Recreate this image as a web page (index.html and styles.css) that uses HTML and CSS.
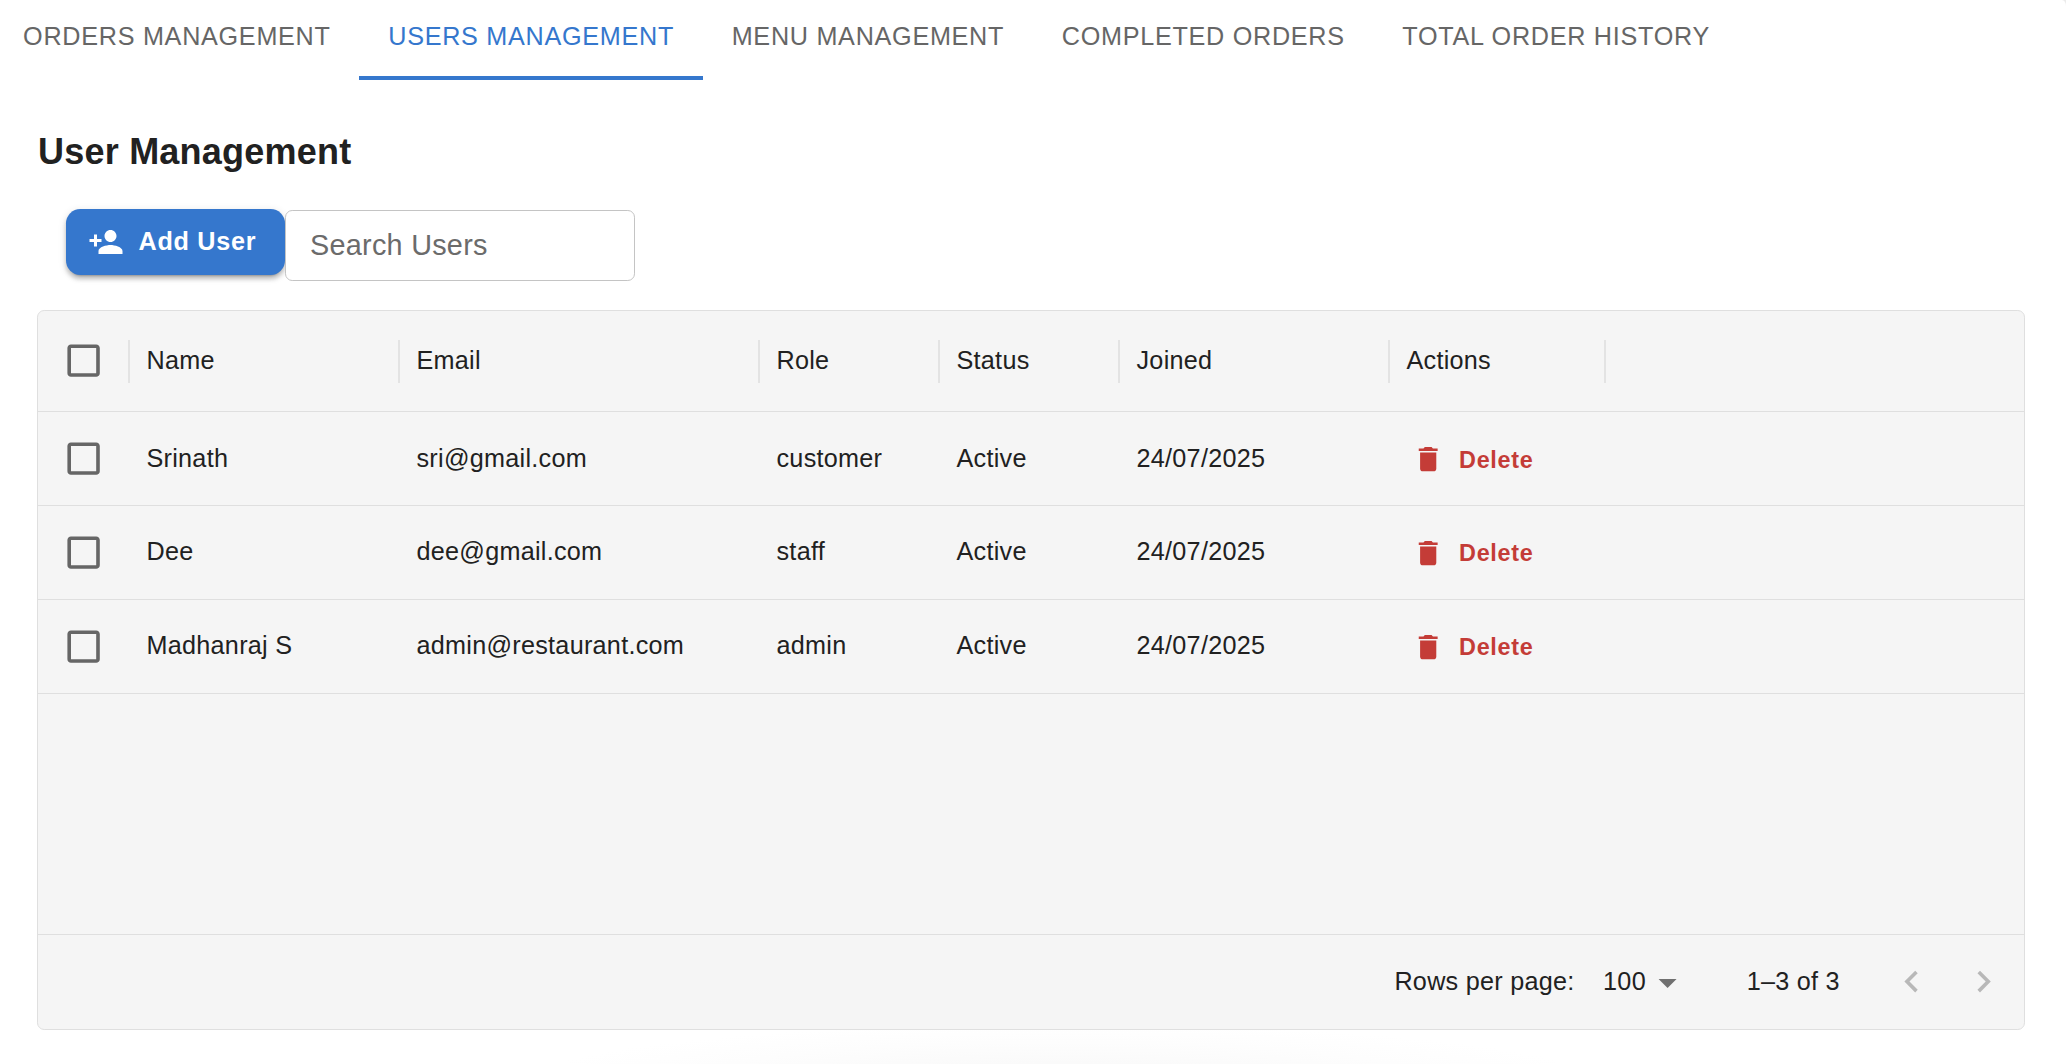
FILE: index.html
```html
<!DOCTYPE html>
<html lang="en">
<head>
<meta charset="utf-8">
<title>User Management</title>
<link rel="stylesheet" href="styles.css">
</head>
<body>
<svg class="defs" aria-hidden="true">
  <symbol id="box" viewBox="0 0 24 24"><path d="M19 5v14H5V5h14m0-2H5c-1.1 0-2 .9-2 2v14c0 1.1.9 2 2 2h14c1.1 0 2-.9 2-2V5c0-1.1-.9-2-2-2z"/></symbol>
  <symbol id="trash" viewBox="0 0 24 24"><path d="M6 19c0 1.1.9 2 2 2h8c1.1 0 2-.9 2-2V7H6v12zM19 4h-3.5l-1-1h-5l-1 1H5v2h14V4z"/></symbol>
</svg>
<nav class="tabs">
  <a class="tab">Orders Management</a>
  <a class="tab active">Users Management</a>
  <a class="tab">Menu Management</a>
  <a class="tab">Completed Orders</a>
  <a class="tab">Total Order History</a>
</nav>
<main class="page">
  <h1 class="title">User Management</h1>
  <div class="toolbar">
    <button class="add"><svg class="add-icon" viewBox="0 0 24 24"><path d="M15 12c2.21 0 4-1.79 4-4s-1.79-4-4-4-4 1.790-4 4 1.790 4 4 4zm-9-2V7H4v3H1v2h3v3h2v-3h3v-2H6zm9 4c-2.670 0-8 1.340-8 4v2h16v-2c0-2.660-5.330-4-8-4z"/></svg><span class="add-label">Add User</span></button>
    <input class="search" type="text" placeholder="Search Users">
  </div>
  <section class="grid">
    <div class="row head">
      <div class="cell check"><svg class="box"><use href="#box"/></svg></div>
      <div class="cell">Name</div><div class="cell">Email</div><div class="cell">Role</div><div class="cell">Status</div><div class="cell">Joined</div><div class="cell">Actions</div>
    </div>
    <div class="row">
      <div class="cell check"><svg class="box"><use href="#box"/></svg></div>
      <div class="cell">Srinath</div><div class="cell">sri@gmail.com</div><div class="cell">customer</div><div class="cell">Active</div><div class="cell">24/07/2025</div>
      <div class="cell action"><button class="delete"><svg class="trash"><use href="#trash"/></svg><span class="delete-label">Delete</span></button></div>
    </div>
    <div class="row lower">
      <div class="cell check"><svg class="box"><use href="#box"/></svg></div>
      <div class="cell">Dee</div><div class="cell">dee@gmail.com</div><div class="cell">staff</div><div class="cell">Active</div><div class="cell">24/07/2025</div>
      <div class="cell action"><button class="delete"><svg class="trash"><use href="#trash"/></svg><span class="delete-label">Delete</span></button></div>
    </div>
    <div class="row lower">
      <div class="cell check"><svg class="box"><use href="#box"/></svg></div>
      <div class="cell">Madhanraj S</div><div class="cell">admin@restaurant.com</div><div class="cell">admin</div><div class="cell">Active</div><div class="cell">24/07/2025</div>
      <div class="cell action"><button class="delete"><svg class="trash"><use href="#trash"/></svg><span class="delete-label">Delete</span></button></div>
    </div>
    <footer class="footer">
      <span class="label">Rows per page:</span>
      <span class="size">100</span>
      <svg class="caret" viewBox="0 0 24 24"><path d="M7 10l5 5 5-5z"/></svg>
      <span class="range">1–3 of 3</span>
      <svg class="nav" viewBox="0 0 24 24"><path d="M15.410 7.410 14 6l-6 6 6 6 1.410-1.410L10.830 12z"/></svg>
      <svg class="nav next" viewBox="0 0 24 24"><path d="M10 6 8.590 7.410 13.170 12l-4.580 4.590L10 18l6-6z"/></svg>
    </footer>
  </section>
</main>
</body>
</html>
```
FILE: styles.css
```css
* { box-sizing: border-box; }
html { background: #ebebeb; }
body {
  margin: 0;
  height: 1064px;
  overflow: hidden;
  border-top-right-radius: 4px 6px;
  /* soft shadow rising from the bottom edge of the window */
  background: #fff radial-gradient(ellipse 540px 60px at 1062px 1084px, #f8f8f8 0%, #fafafa 35%, #fdfdfd 70%, #fff 100%);
  color: #212121;
  font: 25.2px/36px "Liberation Sans", Arial, sans-serif;
}
button { border: 0; font-family: inherit; }
svg { fill: currentColor; flex: none; }
.defs { display: none; }

.tabs { display: flex; height: 80px; margin-left: -5.7px; }
.tab {
  height: 80px;
  padding: 18px 28.8px 0;
  color: #666;
  letter-spacing: 0.72px;
  text-transform: uppercase;
  white-space: nowrap;
}
.tab.active { color: #3577cd; border-bottom: 4px solid #3577cd; }

.page { padding: 43px 41px 0 37px; }
.title {
  margin: 0;
  height: 86px;
  padding-left: 1px;
  font-size: 36px;
  line-height: 58px;
  letter-spacing: 0.22px;
}
.toolbar { display: flex; height: 101px; padding-left: 29px; }
.add {
  display: flex;
  align-items: center;
  gap: 14.4px;
  width: 219px;
  height: 66px;
  padding: 0 0 0 21.6px;
  border-radius: 14.4px;
  background: #3577cd;
  color: #fff;
  font-size: 25.2px;
  font-weight: 700;
  letter-spacing: 0.72px;
  white-space: nowrap;
  box-shadow: 0 5px 2px -4px rgba(0,0,0,.2), 0 4px 4px rgba(0,0,0,.2), 0 2px 9px rgba(0,0,0,.12);
}
.add-icon { width: 36px; height: 36px; }
.add-label { margin-bottom: 2px; padding-left: 0.5px; }
.search {
  width: 350px;
  height: 71px;
  margin-top: 1px;
  padding: 0 24px;
  border: 1px solid #c4c4c4;
  border-radius: 7.2px;
  background: #fff;
  font: 28.8px "Liberation Sans", Arial, sans-serif;
  letter-spacing: 0.27px;
}
.search::placeholder { color: #6b6b6b; opacity: 1; }

.grid {
  display: flex;
  flex-direction: column;
  height: 720px;
  border: 1px solid #dfdfdf;
  border-radius: 7.2px;
  background: #f5f5f5;
  letter-spacing: 0.27px;
}
.row {
  display: grid;
  grid-template-columns: 91.5px 270px 360px 180px 180px 270px 216px;
  align-items: center;
  height: 94px;
  border-bottom: 1px solid #dfdfdf;
}
.row.head { height: 101px; }
.cell {
  display: flex;
  align-items: center;
  padding: 0 0 2px 17px;
  white-space: nowrap;
}
.lower .cell { padding-bottom: 4px; }
.head .cell { height: 43px; border-right: 2px solid #e3e3e3; }
.row .cell.check { justify-content: center; padding: 0; }
.head .cell.check { padding-left: 1.5px; }
.row .cell.action { padding: 0 0 0 17.8px; }
.box { width: 43.2px; height: 43.2px; color: #666; }
.delete {
  display: flex;
  align-items: center;
  gap: 14.4px;
  padding: 2px 0 0 5px;
  background: none;
  color: #c43c37;
  font-size: 23.4px;
  font-weight: 700;
  letter-spacing: 0.67px;
}
.trash { width: 32.4px; height: 32.4px; }
.delete-label { padding-top: 2px; }
.lower .delete-label { padding-top: 0; }

.footer {
  display: flex;
  align-items: center;
  justify-content: flex-end;
  height: 95px;
  margin-top: auto;
  padding-right: 19px;
  border-top: 1px solid #dfdfdf;
}
.label { margin: 0 28.5px 2px 0; }
.size { margin-bottom: 3px; }
.caret { width: 43.2px; height: 43.2px; margin: 2px 57.5px 0 0; color: #707070; }
.range { margin: 0 50px 2px 0; }
.nav { width: 43.2px; height: 43.2px; color: #b8b8b8; }
.nav.next { margin-left: 28.8px; }
```
